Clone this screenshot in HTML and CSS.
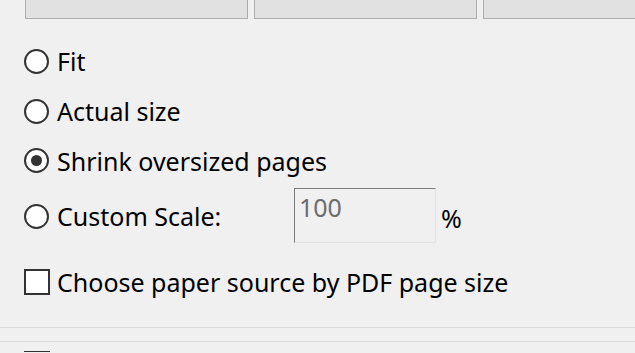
FILE: index.html
```html
<!DOCTYPE html>
<html lang="en">
<head>
  <meta charset="UTF-8">
  <title>Page Sizing &amp; Handling</title>
  <link rel="stylesheet" href="styles.css">
</head>
<body>
  <!-- Mode buttons (cut off at the top) -->
  <div class="tab-row">
    <div class="tab-btn"></div>
    <div class="tab-btn"></div>
    <div class="tab-btn"></div>
  </div>

  <div class="options">
    <label class="opt-row">
      <input type="radio" name="sizing" class="radio">
      <span>Fit</span>
    </label>
    <label class="opt-row">
      <input type="radio" name="sizing" class="radio">
      <span>Actual size</span>
    </label>
    <label class="opt-row row-short">
      <input type="radio" name="sizing" class="radio" checked>
      <span>Shrink oversized pages</span>
    </label>
    <div class="opt-row row-custom">
      <label class="custom-label">
        <input type="radio" name="sizing" class="radio">
        <span>Custom Scale:</span>
      </label>
      <input type="text" class="scale-input" value="100" disabled>
      <span class="pct">%</span>
    </div>
    <label class="opt-row row-check">
      <input type="checkbox" class="check">
      <span>Choose paper source by PDF page size</span>
    </label>
  </div>

  <div class="divider divider-top"></div>
  <div class="divider divider-bottom"></div>

  <div class="next-row">
    <span class="check-stub"></span>
  </div>
</body>
</html>
```

FILE: styles.css
```css
html {
  overflow: hidden;
}

body {
  margin: 0;
  background: #f0f0f0;
  font-family: "Noto Sans", "Open Sans", sans-serif;
  color: #000;
  width: 635px;
  height: 353px;
  overflow: hidden;
}

.tab-row {
  display: flex;
  gap: 6px;
  padding-left: 25px;
  height: 19px;
  overflow: hidden;
}

.tab-btn {
  flex: 0 0 221px;
  height: 18px;
  background: #e1e1e1;
  border: 1px solid #adadad;
  border-top: none;
}

.options {
  margin-top: 17px;
  padding-left: 24px;
}

.opt-row {
  display: flex;
  align-items: center;
  height: 50px;
  font-size: 25px;
  cursor: default;
}

.opt-row span {
  margin-left: 8px;
}

.row-short {
  height: 49px;
}

.row-custom {
  height: 62px;
}

.custom-label {
  display: flex;
  align-items: center;
  width: 270px;
}

.radio {
  appearance: none;
  -webkit-appearance: none;
  margin: 0;
  width: 25px;
  height: 25px;
  border: 2px solid #333;
  border-radius: 50%;
  background: #fff;
  box-sizing: border-box;
  display: grid;
  place-content: center;
}

.radio:checked::before {
  content: "";
  width: 11px;
  height: 11px;
  border-radius: 50%;
  background: #333;
}

.scale-input {
  width: 142px;
  height: 55px;
  box-sizing: border-box;
  margin: 0 0 2px 0;
  padding: 0 0 17px 4px;
  font-family: inherit;
  font-size: 25px;
  color: #6d6d6d;
  background: #f0f0f0;
  border: 1px solid #7a7a7a;
  border-right-color: #e3e3e3;
  border-bottom-color: #e3e3e3;
  outline: none;
}

.opt-row .pct {
  margin-left: 5px;
  padding-top: 4px;
}

.row-check {
  height: 49px;
  margin-top: 10px;
}

.row-check span {
  margin-left: 7px;
}

.check {
  appearance: none;
  -webkit-appearance: none;
  margin: 0;
  width: 26px;
  height: 26px;
  border: 2px solid #333;
  background: #fff;
  box-sizing: border-box;
}

.divider {
  height: 1px;
  background: #d9d9d9;
}

.divider-top {
  margin-top: 21px;
}

.divider-bottom {
  margin-top: 13px;
}

.next-row {
  height: 10px;
  overflow: hidden;
  padding: 9px 0 0 24px;
  box-sizing: border-box;
}

.check-stub {
  display: block;
  width: 26px;
  height: 26px;
  border: 2px solid #333;
  box-sizing: border-box;
  background: #fff;
}
```
